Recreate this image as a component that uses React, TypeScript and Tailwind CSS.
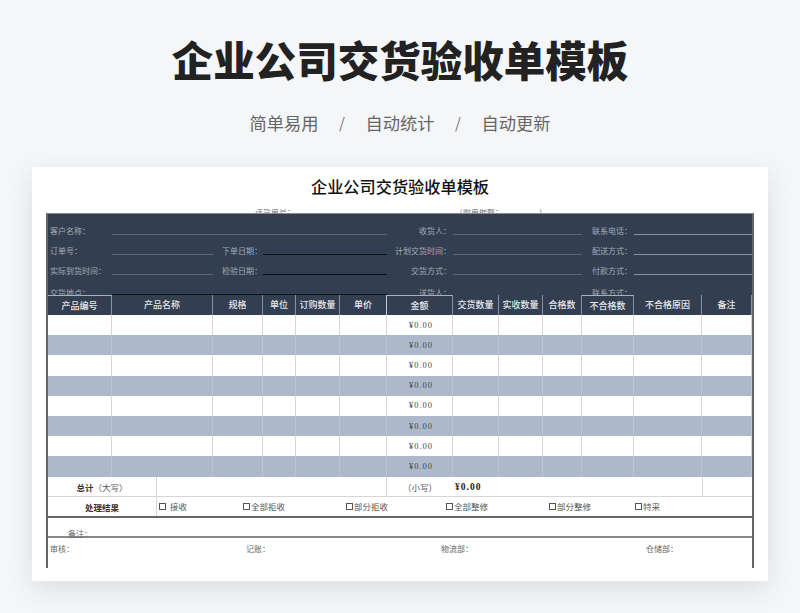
const cols = "grid grid-cols-[64px_101px_50px_33px_44px_47px_66px_46px_44px_39px_52px_68px_50px]";
const headers = ["产品编号", "产品名称", "规格", "单位", "订购数量", "单价", "金额", "交货数量", "实收数量", "合格数", "不合格数", "不合格原因", "备注"];
const boxed = [0, 6, 10];
const rows = [0, 1, 2, 3, 4, 5, 6, 7];
const checks = [
  { label: "接收", w: "w-[84px]", gap: "ml-[4px]" },
  { label: "全部拒收", w: "w-[103px]", gap: "ml-[1px]" },
  { label: "部分拒收", w: "w-[100px]", gap: "ml-[1px]" },
  { label: "全部整修", w: "w-[103px]", gap: "ml-[1px]" },
  { label: "部分整修", w: "w-[86px]", gap: "ml-[1px]" },
  { label: "特采", w: "w-[60px]", gap: "ml-[1px]" },
];

function Label({ text, className = "" }: { text: string; className?: string }) {
  return <div className={`flex items-end text-[8px] leading-[14px] text-[#a3abb6] whitespace-nowrap ${className}`}>{text}</div>;
}

function Line({ span, color }: { span: string; color: string }) {
  return <div className={`${span} border-b ${color}`} />;
}

function InfoBlock() {
  return (
    <div className="bg-[#333f50] h-[81px] overflow-hidden">
      <div className={`${cols} h-[21px]`}>
        <Label text="客户名称：" className="pl-[2px] mb-[-3px]" />
        <Line span="col-span-5" color="border-[#5b6675]" />
        <Label text="收货人：" className="justify-end pr-[2px] mb-[-3px]" />
        <Line span="col-span-3" color="border-[#5b6675]" />
        <Label text="联系电话：" className="pl-[10px] mb-[-3px]" />
        <Line span="col-span-2" color="border-[#8791a0]" />
      </div>
      <div className={`${cols} h-[20px]`}>
        <Label text="订单号：" className="pl-[2px] mb-[-3px]" />
        <Line span="" color="border-[#5b6675]" />
        <Label text="下单日期：" className="pl-[9px] mb-[-3px]" />
        <Line span="col-span-3" color="border-[#0b1018]" />
        <Label text="计划交货时间：" className="justify-end pr-[2px] mb-[-3px]" />
        <Line span="col-span-3" color="border-[#5b6675]" />
        <Label text="配送方式：" className="pl-[10px] mb-[-3px]" />
        <Line span="col-span-2" color="border-[#8791a0]" />
      </div>
      <div className={`${cols} h-[20px]`}>
        <Label text="实际到货时间：" className="pl-[2px] mb-[-3px]" />
        <Line span="" color="border-[#5b6675]" />
        <Label text="检验日期：" className="pl-[9px] mb-[-3px]" />
        <Line span="col-span-3" color="border-[#0b1018]" />
        <Label text="交货方式：" className="justify-end pr-[2px] mb-[-3px]" />
        <Line span="col-span-3" color="border-[#5b6675]" />
        <Label text="付款方式：" className="pl-[10px] mb-[-3px]" />
        <Line span="col-span-2" color="border-[#8791a0]" />
      </div>
      <div className={`${cols} h-[20px]`}>
        <Label text="交货地点：" className="pl-[2px] mb-[-5px]" />
        <Line span="col-span-5" color="border-[#0b1018]" />
        <Label text="送货人：" className="justify-end pr-[2px] mb-[-5px]" />
        <Line span="col-span-3" color="border-[#333f50]" />
        <Label text="联系方式：" className="pl-[10px] mb-[-5px]" />
      </div>
    </div>
  );
}

export default function App() {
  return (
    <div className="w-[800px] h-[613px] overflow-hidden bg-[#f4f6f8] flex flex-col items-center font-['Noto_Sans_CJK_SC',sans-serif]">
      <h1 className="mt-[28px] h-[62px] text-[41.5px] leading-[62px] font-black text-[#222222]">企业公司交货验收单模板</h1>
      <div className="mt-[19px] h-[28px] flex items-center text-[17.25px] leading-[28px] text-[#666666]">
        <span>简单易用</span>
        <span className="w-[47px] text-center text-[15px] text-[#777777]">/</span>
        <span>自动统计</span>
        <span className="w-[47px] text-center text-[15px] text-[#777777]">/</span>
        <span>自动更新</span>
      </div>
      <div className="mt-[30px] w-[736px] h-[414px] bg-white shadow-[0_8px_24px_rgba(60,70,90,0.13)] pl-[14px] flex flex-col">
        <h2 className="mt-[8px] h-[22px] text-center pr-[14px] text-[16.2px] leading-[22px] font-medium text-[#111111]">企业公司交货验收单模板</h2>
        <div className="mt-[12px] h-[4px] flex overflow-hidden text-[8px] leading-[6px] text-[#7b7b7b]">
          <span className="ml-[209px] w-[200px]">送货单号：</span>
          <span className="whitespace-pre">（附单据数：                    ）</span>
        </div>
        <div className="w-[708px] h-[355px] border-x-2 border-t border-x-[#666666] border-t-[#8a8a8a] overflow-hidden">
          <InfoBlock />
          <div className={`${cols} h-[20px] bg-[#333f50]`}>
            {headers.map((h, i) => (
              <div
                key={h}
                className={`flex items-center justify-center text-[9px] font-medium text-[#e6e8ec] border-r border-[#8791a0] whitespace-nowrap ${boxed.includes(i) ? "border-t border-t-[#a9b0bb]" : ""} ${i === 5 ? "border-r-[#c9cdd3]" : ""}`}
              >
                {h}
              </div>
            ))}
          </div>
          {rows.map((r) => (
            <div key={r} className={`${cols} h-[20.2px] ${r % 2 ? "bg-[#adb8cb]" : "bg-white"}`}>
              {headers.map((h, i) => (
                <div
                  key={h}
                  className={`flex items-center justify-center pl-[3px] font-['Liberation_Serif',serif] text-[8.5px] tracking-[1px] text-[#4a4a4a] border-r ${r % 2 ? "border-[#bcc4d3]" : "border-[#d6d6d6]"}`}
                >
                  {i === 6 ? "¥0.00" : ""}
                </div>
              ))}
            </div>
          ))}
          <div className="flex h-[20px] border-b border-[#d6d6d6] text-[#333333]">
            <div className="w-[109px] pt-[2px] border-r border-[#d6d6d6] flex items-center justify-center text-[8.5px] whitespace-nowrap">
              <span className="font-bold">总计</span>
              <span className="text-[#555555]">（大写）</span>
            </div>
            <div className="w-[230px] border-r border-[#d6d6d6]" />
            <div className="w-[66px] pt-[2px] flex items-center justify-center text-[8.5px] text-[#555555]">（小写）</div>
            <div className="w-[249px] pl-[2px] pt-[3px] flex items-center font-['Liberation_Serif',serif] text-[9.5px] tracking-[1px] font-bold text-[#222222]">¥0.00</div>
            <div className="w-[50px] border-l border-[#d6d6d6]" />
          </div>
          <div className="flex h-[21px] border-b-2 border-[#666666]">
            <div className="w-[109px] pt-[2px] border-r border-[#d6d6d6] flex items-center justify-center text-[8.5px] font-bold text-[#333333]">处理结果</div>
            <div className="pl-[2px] flex items-center text-[8.5px] text-[#555555]">
              {checks.map((c) => (
                <div key={c.label} className={`${c.w} flex items-center`}>
                  <span className="w-[7px] h-[7px] border border-[#555555] shrink-0" />
                  <span className={c.gap}>{c.label}</span>
                </div>
              ))}
            </div>
          </div>
          <div className="h-[20.5px] border-b-2 border-[#8a8a8a] flex items-end pl-[20px] text-[8px] leading-[4px] text-[#666666]">备注：</div>
          <div className="flex pt-[5px] text-[8px] leading-[12px] text-[#666666]">
            <span className="w-[198px] pl-[2px]">审核：</span>
            <span className="w-[195px]">记账：</span>
            <span className="w-[205px]">物流部：</span>
            <span>仓储部：</span>
          </div>
        </div>
      </div>
    </div>
  );
}
